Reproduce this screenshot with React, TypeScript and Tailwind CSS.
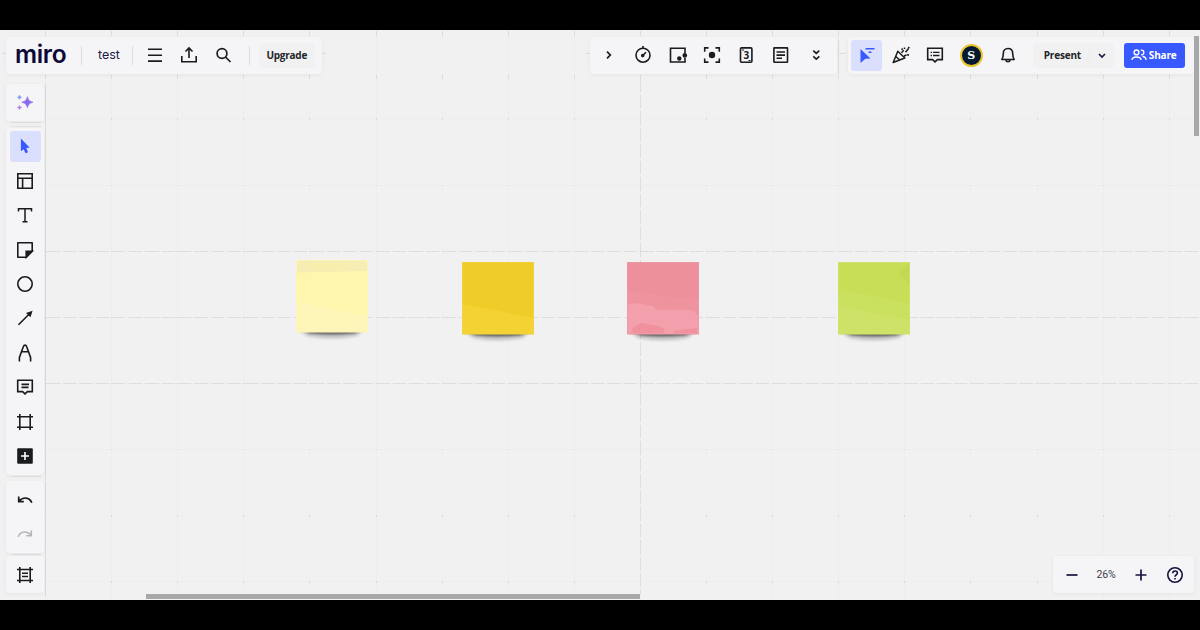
import type { ReactNode } from 'react'

const INK = '#1a1b1e'
const STEP = 66.1
const COLS = Array.from({ length: 18 }, (_, i) => 45.5 + i * STEP)
const ROWS = Array.from({ length: 9 }, (_, i) => 22.8 + i * STEP)

interface IconProps {
  children: ReactNode
  color?: string
  width?: number
}

function Icon({ children, color = INK, width = 1.6 }: IconProps) {
  return (
    <svg width="20" height="20" viewBox="0 0 20 20" fill="none" stroke={color} strokeWidth={width} className="shrink-0">
      {children}
    </svg>
  )
}

function Tool({ children, active = false, label }: { children: ReactNode; active?: boolean; label: string }) {
  return (
    <button
      type="button"
      aria-label={label}
      className={`flex h-[31px] w-[31px] shrink-0 items-center justify-center rounded-[3px] ${active ? 'bg-[#dadffe] pb-px' : ''}`}
    >
      {children}
    </button>
  )
}

function Panel({ children, className = '' }: { children: ReactNode; className?: string }) {
  return (
    <div className={`flex items-center rounded-[4px] bg-[#f5f5f8] shadow-[0_1px_4px_rgba(0,0,0,0.05)] ${className}`}>
      {children}
    </div>
  )
}

function Divider({ className = '' }: { className?: string }) {
  return <div className={`h-[19px] w-px shrink-0 bg-[#dedee2] ${className}`} />
}

// Board grid: faint cells, dashed major lines
function Grid() {
  return (
    <svg className="absolute inset-0" width="1200" height="570" fill="none" shapeRendering="crispEdges">
      {COLS.map(x => (
        <g key={x}>
          <path d={`M${x} 0V570`} stroke="#eeeeee" />
          <path d={`M${x} 1V6M${x} 45V49`} stroke="#dcdcdc" />
        </g>
      ))}
      {ROWS.map(y => (
        <path key={y} d={`M0 ${y}H1200`} stroke="#eeeeee" />
      ))}
      {COLS.flatMap(x => ROWS.slice(1).map(y => (
        <path key={`${x}-${y}`} d={`M${x} ${y - 0.5}v1.5`} stroke="#dadada" />
      )))}
      {[221.5, 287.5, 353.5].map(y => (
        <path key={y} d={`M46 ${y}H1200`} stroke="#dedede" strokeDasharray="13.5 3" />
      ))}
      <path d="M640.5 48V564" stroke="#dedede" strokeDasharray="13.5 3" />
      <path d="M45.5 54V566" stroke="#dcdcdd" />
      <path d="M2 23.5h4M322 23.5h4M585 23.5h5M838.5 10v34M840 23.5h6" stroke="#dedede" />
      <path d="M11 92.5H41M11 96.5H41M11 446.5H41M11 524.5H41" stroke="#e2e2e4" />
    </svg>
  )
}

interface NoteProps {
  pos: string
  base: string
  light: string
  edge: string
  children?: ReactNode
}

function Note({ pos, base, light, edge, children }: NoteProps) {
  return (
    <svg className={`absolute ${pos}`} width="80" height="84" viewBox="0 0 80 84">
      <path d="M3 70H68L61 76Q36 81 11 76Z" fill="#000" opacity="0.18" className="blur-[1.5px]" />
      <path d="M5 70H67L58 73.5Q36 75.5 14 73.5Z" fill="#000" opacity="0.5" className="blur-[1px]" />
      <path d="M0 0H72V72.3H0Z" fill={base} />
      <path d="M0 42 72 56V72.3H0Z" fill={light} />
      {children}
      <path d="M.5 .5H71.5V71.8H.5Z" fill="none" stroke={edge} strokeWidth="1" opacity="0.6" />
    </svg>
  )
}

const commentBox = 'M2.7 3.2H17.3V14.6H12.4L10 16.9 7.6 14.6H2.7Z'

export default function App() {
  return (
    <div className="flex h-[630px] w-[1200px] flex-col overflow-hidden bg-black py-[30px] font-['Open_Sans',sans-serif]">
      <main className="relative h-[570px] bg-[#f1f1f1]">
        <Grid />

        <Note pos="left-[296px] top-[230px]" base="#fff6ad" light="#fdf5b8" edge="#fbf3c0">
          <path d="M1 1H67L71 2V11L1 12.5Z" fill="#f5edb3" />
          <path d="M12 3H52V10H12Z" fill="#f7eead" />
        </Note>
        <Note pos="left-[462px] top-[232px]" base="#f0cc29" light="#f4d233" edge="#f1d347" />
        <Note pos="left-[627px] top-[232px]" base="#ee909b" light="#f093a0" edge="#eda0aa">
          <path d="M0 28 36 34 72 38V50H0Z" fill="#ef939e" />
          <path d="M1 42 10 41 26 44 30 48H65L71 53V71.5H1Z" fill="#f3a0ac" />
          <path d="M5 66 14 61 31 64 38 67 36 71H6ZM48 69 70 66V71H47Z" fill="#f0919d" />
        </Note>
        <Note pos="left-[838px] top-[232px]" base="#c8de57" light="#cde266" edge="#cfe47a">
          <path d="M0 28 36 34 72 42V58L0 44Z" fill="#cae05f" />
          <path d="M71 1V21L60 11Z" fill="#c2d953" />
        </Note>

        <div className="absolute inset-0 flex flex-col">
          <header className="mt-[7px] flex h-[37px] shrink-0 pl-[6px] [&_button]:pb-px">
            <Panel className="w-[316px] pl-[9px]">
              <span className="-mt-[3px] w-[53px] font-['Inter'] text-[24.5px] leading-none font-semibold tracking-[-0.3px] text-[#0b0838]">miro</span>
              <Divider className="ml-[13px]" />
              <span className="ml-[16px] w-[23px] font-['Inter'] text-[12.5px] text-[#1c1a44]">test</span>
              <Divider className="ml-[11px]" />
              <div className="ml-[6px] flex gap-[3.4px]">
                <Tool label="Menu"><Icon><path d="M3 4.3H17M3 10.2H17M3 16.1H17" /></Icon></Tool>
                <Tool label="Export"><Icon><path d="M2.8 11V16.7H17.2V11M10 13V3.5M6.5 6.5 10 3 13.5 6.5" /></Icon></Tool>
                <Tool label="Search"><Icon width={1.7}><circle cx="9" cy="8.5" r="4.9" /><path d="M12.5 12 17.5 17" /></Icon></Tool>
              </div>
              <Divider className="ml-[10px]" />
              <button type="button" className="ml-[9px] h-[25px] w-[56px] rounded-[4px] bg-[#f1f1f2] text-[10px] font-bold tracking-[-0.25px] text-[#222428]">Upgrade</button>
            </Panel>

            <Panel className="ml-[268px] w-[247px] gap-[3.6px] pl-[3px]">
              <Tool label="Collapse"><Icon width={1.7}><path d="M8 6.7 11.3 10 8 13.3" /></Icon></Tool>
              <Tool label="Timer"><Icon><circle cx="10" cy="10.2" r="7" /><path d="M10 1V3.5M9.5 10.8 13 7.2" /><circle cx="9.7" cy="10.6" r="1" fill={INK} /></Icon></Tool>
              <Tool label="Video">
                <Icon>
                  <path d="M17 8V3.2H2.5V17H17V13" />
                  <circle cx="11.3" cy="13.5" r="2.2" fill={INK} stroke="none" />
                  <circle cx="16.8" cy="10.4" r="2.3" fill={INK} stroke="none" />
                </Icon>
              </Tool>
              <Tool label="Focus">
                <Icon>
                  <path d="M2.7 6.7V2.9H6.5M13.5 2.9H17.3V6.7M17.3 13.5V17.1H13.5M6.5 17.1H2.7V13.5" />
                  <circle cx="10" cy="10" r="3.2" fill={INK} stroke="none" />
                </Icon>
              </Tool>
              <Tool label="Estimation">
                <Icon>
                  <rect x="3.5" y="2.9" width="11.4" height="14.4" rx="1" />
                  <path d="M5 5h2M11.5 15.5h2" strokeWidth="1" />
                  <text x="9.3" y="13.8" textAnchor="middle" fontSize="10" fontWeight="700" fill={INK} stroke="none">3</text>
                </Icon>
              </Tool>
              <Tool label="Notes"><Icon><rect x="2.9" y="2.9" width="13.6" height="14.4" rx=".5" /><path d="M5.5 7H14M5.5 10.1H14M5.5 13.2H11" /></Icon></Tool>
              <Tool label="More apps"><Icon width={1.6}><path d="M7.3 5.6 10.3 8.3 13.3 5.6M7.3 11.4 10.3 14.1 13.3 11.4" /></Icon></Tool>
            </Panel>

            <Panel className="ml-[11px] w-[346px] pl-[3px]">
              <div className="flex gap-[3.4px]">
                <Tool label="Reactions cursor" active>
                  <Icon color="#3859ff">
                    <path d="M3.5 4 13.5 13.5 8.3 13.8 3.5 18Z" fill="#3859ff" stroke="none" />
                    <path d="M8.5 3.8H17.5M11.5 7.2H14.5" strokeWidth="1.5" />
                  </Icon>
                </Tool>
                <Tool label="Celebrate">
                  <Icon width={1.5}>
                    <path d="M6.8 6.2 13.8 13 2.2 17.5ZM4.8 11.5 9 15.2M10.5 7.8 12.7 5.3M13 11 15.5 10M11 3.3l.3 1.7M14.5 7.2 17.5 3.5M16 9.5l2 .8M13.5 2.5v1.5M17.2 2l1.2 1.2" strokeLinejoin="round" />
                  </Icon>
                </Tool>
                <Tool label="Comments">
                  <Icon>
                    <path d={commentBox} />
                    <path d="M8 7.4H14.5M8 10.5H14.5M5.6 7.4H7M5.6 10.5H7" strokeWidth="1.3" />
                  </Icon>
                </Tool>
              </div>
              <div className="ml-[9px] flex h-[23px] w-[23px] shrink-0 items-center justify-center rounded-full border-2 border-[#e9c52f] bg-[#051a30] font-['DejaVu_Serif'] text-[11px] leading-none font-bold text-white">S</div>
              <div className="ml-[10px] flex">
                <Tool label="Notifications">
                  <Icon>
                    <path d="M3.8 14.5C5.3 12.8 5.3 11.5 5.3 8.5 5.3 5.3 7.2 3.5 10 3.5S14.7 5.3 14.7 8.5C14.7 11.5 14.7 12.8 16.2 14.5Z" strokeLinejoin="round" />
                    <path d="M7.9 15.2C8.2 17.2 11.8 17.2 12.1 15.2" />
                  </Icon>
                </Tool>
              </div>
              <div className="ml-[9px] flex h-[25px] w-[81px] shrink-0 items-center rounded-[4px] bg-[#f1f1f2]">
                <span className="w-[56px] pl-[11px] text-[10px] font-bold tracking-[-0.2px] text-[#222428]">Present</span>
                <div className="flex h-full grow items-center justify-center border-l border-[#eeeef1]">
                  <Icon color="#1c1a44" width={1.7}><path d="M7 8 10 11 13 8" /></Icon>
                </div>
              </div>
              <button type="button" className="ml-[10px] flex h-[25px] w-[61px] shrink-0 items-center rounded-[3px] bg-[#3859ff] pl-[7px] text-[10px] font-bold tracking-[-0.15px] text-white">
                <svg width="16" height="14" viewBox="0 0 16 14" fill="none" stroke="#fff" strokeWidth="1.4" className="mr-[2px] shrink-0">
                  <circle cx="5.5" cy="4.4" r="2.4" />
                  <path d="M1 12C1.2 8 9.8 8 10 12M9.7 2.3C13.8 1.2 13.8 7.3 10.2 6.7M11.5 8.5C13.6 8.6 15 10 15 12" />
                </svg>
                Share
              </button>
            </Panel>
          </header>

          <nav className="mt-[10px] ml-[6px] flex w-[38px] flex-col">
            <Panel className="h-[37px] justify-center pb-px">
              <Icon color="none">
                <path d="M12.4 4.7C13.5 8.3 14.3 9.1 18 10.2 14.3 11.3 13.5 12.1 12.4 15.8 11.3 12.1 10.5 11.3 6.8 10.2 10.5 9.1 11.3 8.3 12.4 4.7Z" fill="#896cec" stroke="#896cec" strokeWidth=".6" />
                <path d="M4.5 3 5.3 4.5 6.8 5.3 5.3 6.1 4.5 7.6 3.7 6.1 2.2 5.3 3.7 4.5Z" fill="#799eee" stroke="#799eee" strokeWidth=".4" />
                <path d="M4.5 13.2 5.3 14.7 6.8 15.5 5.3 16.3 4.5 17.8 3.7 16.3 2.2 15.5 3.7 14.7Z" fill="#b481e8" stroke="#b481e8" strokeWidth=".4" />
              </Icon>
            </Panel>
            <Panel className="mt-[7px] h-[347px] flex-col gap-[3.4px] pt-[3px]">
              <Tool label="Select" active><Icon><path d="M5.9 2.5 14.6 11.5 11.3 12 13 16.2 10.5 17.3 8.7 13.3 5.9 15.3Z" fill="#3859ff" stroke="none" /></Icon></Tool>
              <Tool label="Templates"><Icon><path d="M2.8 2.8H17.2V17.2H2.8ZM2.8 7.2H17.2M7.6 7.2V17.2" /></Icon></Tool>
              <Tool label="Text"><Icon width={1.5}><path d="M3.5 6.5V3.8H16.5V6.5M10 3.8V16.6M7.5 16.7H12.5" /></Icon></Tool>
              <Tool label="Sticky note"><Icon><path d="M2.8 2.8H17.2V11L11.2 17.2H2.8Z" strokeLinejoin="round" /><path d="M11.2 11.2H17.2L11.2 17.2Z" fill={INK} /></Icon></Tool>
              <Tool label="Shape"><Icon><circle cx="10" cy="10" r="7.2" /></Icon></Tool>
              <Tool label="Connection line"><Icon><path d="M3.5 16.8 14 6.3" /><path d="M17.6 2.7 15.5 9.2 11 5Z" fill={INK} stroke="none" /></Icon></Tool>
              <Tool label="Pen"><Icon><path d="M4.4 18.5V14.5L8.5 3.2C9 1.7 11 1.7 11.5 3.2L15.6 14.5V18.5M6.9 8.7H13.1" /></Icon></Tool>
              <Tool label="Comment"><Icon><path d={commentBox} /><path d="M6.5 7.4H14M6.5 10.4H13.5" /></Icon></Tool>
              <Tool label="Frame"><Icon><path d="M4.8 2V18M15.2 2V18M2 4.8H18M2 15.2H18" /></Icon></Tool>
              <Tool label="More"><Icon><rect x="2.2" y="2.2" width="15.6" height="15.6" rx="1" fill={INK} stroke="none" /><path d="M10 6V14M6 10H14" stroke="#fff" /></Icon></Tool>
            </Panel>
            <Panel className="mt-[6px] h-[72px] flex-col gap-[3.4px] pt-[3px]">
              <Tool label="Undo"><Icon width={1.7}><path d="M3.7 6.5V11.7H8.8M4 11.3C7.5 6.8 14.5 6.6 16.8 12.8" /></Icon></Tool>
              <Tool label="Redo"><Icon color="#b5b6bb"><path d="M16.3 6.5V11.7H11.2M16 11.3C12.5 6.8 5.5 6.6 3.2 12.8" /></Icon></Tool>
            </Panel>
            <Panel className="mt-[3px] h-[37px] justify-center pt-px">
              <Icon><path d="M4.8 2V18M15.2 2V18M2 4.5H18M2 15.5H18M7 8.3H13M7 11.5H13" /></Icon>
            </Panel>
          </nav>
        </div>

        <Panel className="absolute top-[526px] left-[1053px] h-[37px] w-[141px] pt-px pl-[3px]">
          <Tool label="Zoom out"><Icon color="#16123f" width={1.7}><path d="M4.5 10H15.5" /></Icon></Tool>
          <span className="w-[38px] text-center font-['Roboto'] text-[10.5px] tracking-[-0.2px] text-[#3d3d45]">26%</span>
          <Tool label="Zoom in"><Icon color="#16123f" width={1.7}><path d="M4.5 10H15.5M10 4.5V15.5" /></Icon></Tool>
          <div className="ml-[3px] flex">
            <Tool label="Help">
              <Icon color="#16123f">
                <circle cx="10" cy="10" r="7.2" />
                <path d="M7.7 8.3C7.7 5.2 12.4 5.2 12.4 8.1 12.4 9.8 10 9.7 10 11.7M10 13V14.5" />
              </Icon>
            </Tool>
          </div>
        </Panel>

        <div className="absolute top-[6px] left-[1194px] h-[100px] w-[5px] bg-[#a8a8a8]" />
        <div className="absolute top-[564px] left-[146px] h-[5px] w-[494px] bg-[#a8a8a8]" />
      </main>
    </div>
  )
}
